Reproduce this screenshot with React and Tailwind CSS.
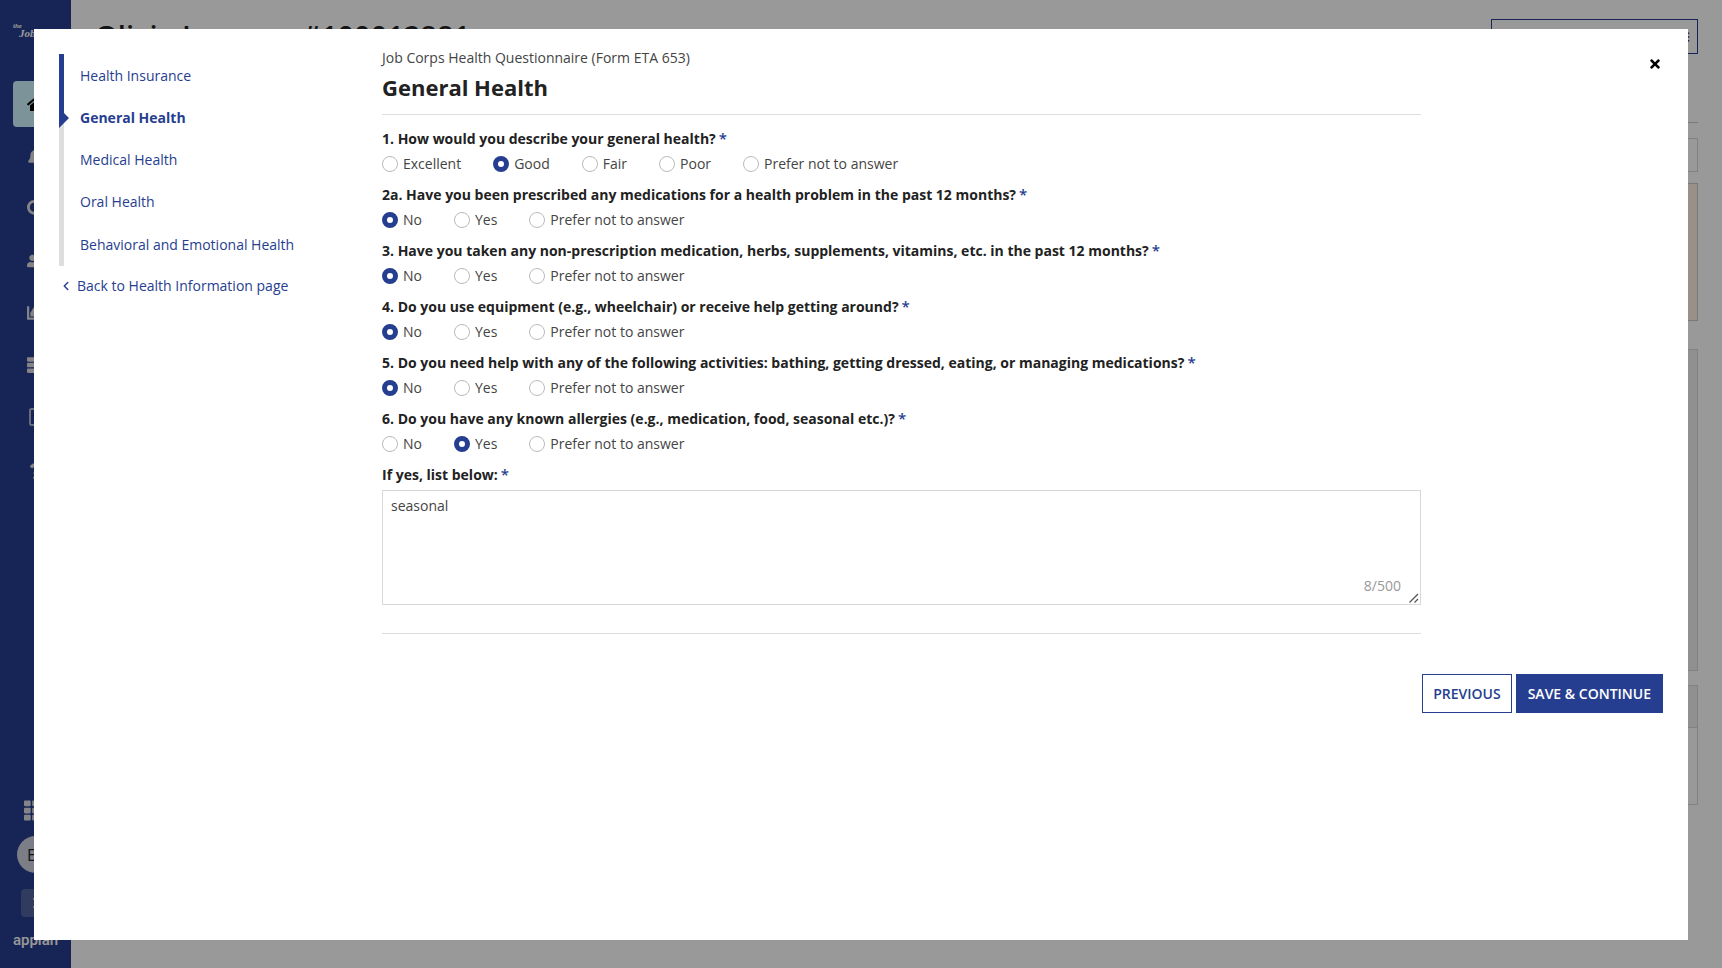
import { useState } from "react";
import { ChevronLeft } from "lucide-react";
import { FaHome, FaBell, FaSearch, FaUserFriends, FaChartArea, FaServer, FaQuestion, FaTh, FaTimes, FaChevronRight, FaChevronDown, FaBars } from "react-icons/fa";

const sideLinks = [
  { name: "Alerts", Icon: FaBell },
  { name: "Search", Icon: FaSearch },
  { name: "People", Icon: FaUserFriends },
  { name: "Reports", Icon: FaChartArea },
  { name: "Records", Icon: FaServer },
];

const steps = ["Health Insurance", "General Health", "Medical Health", "Oral Health", "Behavioral and Emotional Health"];
const currentStep = 1;

const yesNo = ["No", "Yes", "Prefer not to answer"];
const questions = [
  { id: "q1", text: "1. How would you describe your general health?", options: ["Excellent", "Good", "Fair", "Poor", "Prefer not to answer"], value: "Good" },
  { id: "q2a", text: "2a. Have you been prescribed any medications for a health problem in the past 12 months?", options: yesNo, value: "No" },
  { id: "q3", text: "3. Have you taken any non-prescription medication, herbs, supplements, vitamins, etc. in the past 12 months?", options: yesNo, value: "No" },
  { id: "q4", text: "4. Do you use equipment (e.g., wheelchair) or receive help getting around?", options: yesNo, value: "No" },
  { id: "q5", text: "5. Do you need help with any of the following activities: bathing, getting dressed, eating, or managing medications?", options: yesNo, value: "No" },
  { id: "q6", text: "6. Do you have any known allergies (e.g., medication, food, seasonal etc.)?", options: yesNo, value: "Yes" },
];

function Required() {
  return <span className="ml-[3px] text-[15px] leading-none font-semibold text-[#263e8f]">*</span>;
}

function SideLink({ name, children }) {
  return (
    <a href="#" aria-label={name} className="flex h-[52px] w-full items-center justify-center">
      {children}
    </a>
  );
}

function Sidebar() {
  return (
    <nav className="flex w-[71px] shrink-0 flex-col items-center bg-[#263e8f] text-[#dcdce0]">
      <div className="flex h-[81px] w-full flex-col pt-6 pl-[13px] font-['Liberation_Serif',serif] font-bold italic text-white">
        <span className="text-[7px] leading-[4px]">the</span>
        <span className="pl-1.5 text-[11px] leading-[11px] whitespace-nowrap">JobCorps</span>
      </div>
      <a href="#" aria-label="Home" className="mb-1 flex h-[46px] w-[45px] items-center justify-center rounded bg-[#cdf5ff] text-black">
        <FaHome className="size-[18px]" />
      </a>
      {sideLinks.map(({ name, Icon }) => (
        <SideLink key={name} name={name}>
          <Icon className="size-[18px]" />
        </SideLink>
      ))}
      <SideLink name="Devices">
        <svg viewBox="0 0 14 18" className="h-[18px] w-3.5" fill="none" stroke="currentColor" strokeWidth="1.5">
          <rect x="1" y="1" width="12" height="16" rx="1" />
        </svg>
      </SideLink>
      <SideLink name="Help">
        <FaQuestion className="mt-1 size-[17px]" />
      </SideLink>
      <div className="mt-auto flex flex-col items-center">
        <button type="button" aria-label="Apps" className="flex h-9 items-center">
          <FaTh className="size-[23px]" />
        </button>
        <span className="mt-2 flex size-[37px] items-center justify-center rounded-full bg-[#cdd2e0] text-base text-[#222]">EL</span>
        <button type="button" aria-label="Expand menu" className="mt-4 flex h-7 w-[29px] items-center justify-center rounded bg-[#50639f]">
          <FaChevronRight className="size-3" />
        </button>
        <span className="mt-2 mb-[13px] font-['Roboto',sans-serif] text-[15px] leading-[30px] font-medium text-white">appian</span>
      </div>
    </nav>
  );
}

function RecordPage() {
  return (
    <main className="flex min-w-0 grow flex-col bg-white px-6">
      <div className="flex h-[123px] items-start justify-between border-b border-[#ccc] pt-[19px]">
        <h1 className="text-[29px] leading-[34px] font-semibold text-[#222]">Olivia Lorenzo #100012881</h1>
        <button type="button" className="flex h-[35px] w-[207px] items-center justify-between border border-[#263e8f] px-[7px] text-sm text-[#263e8f]">
          RECORD ACTIONS <FaBars className="size-3" />
        </button>
      </div>
      <div className="mt-[15px] flex h-[34px] items-center justify-end border border-[#d8d8d8] px-2 text-[#ccc]">
        <FaChevronDown className="size-2" />
      </div>
      <div className="mt-[11px] h-[138px] border border-[#ccc] bg-[#fff0e1]" />
      <div className="mt-7 h-[322px] border border-[#d8d8d8] bg-[#f0f0f0]" />
      <div className="mt-3.5 h-[120px] border border-[#d8d8d8]">
        <div className="h-[42px] border-b border-[#d8d8d8] bg-[#f0f0f0]" />
      </div>
    </main>
  );
}

function StepNav() {
  return (
    <nav className="w-[326px] shrink-0 pt-[25px] pl-[25px]">
      <ol className="flex flex-col">
        {steps.map((step, i) => (
          <li key={step} className="flex h-[42px] items-center last:h-11">
            {i === currentStep ? (
              <svg viewBox="0 0 10 42" className="h-full w-2.5" aria-hidden="true">
                <rect width="5" height="42" fill="#dedede" />
                <path d="M0 0H5V17L10 22L0 32Z" fill="#263e8f" />
              </svg>
            ) : (
              <span className={i < currentStep ? "mr-[5px] h-full w-[5px] bg-[#263e8f]" : "mr-[5px] h-full w-[5px] bg-[#dedede]"} />
            )}
            <a href="#" aria-current={i === currentStep ? "step" : undefined} className={i === currentStep ? "pt-0.5 pl-[11px] font-bold text-[#263e8f]" : "pt-0.5 pl-[11px] text-[#263e8f]"}>
              {step}
            </a>
          </li>
        ))}
      </ol>
      <a href="#" className="mt-2.5 flex items-center gap-1 text-[#263e8f]">
        <ChevronLeft className="size-3.5" strokeWidth={2.5} />
        Back to Health Information page
      </a>
    </nav>
  );
}

function Question({ id, text, options, value, onChange }) {
  return (
    <fieldset className="pb-[7px]">
      <legend className="leading-6 font-bold text-[#222]">
        {text}
        <Required />
      </legend>
      <div className="flex flex-wrap gap-x-8 pt-px">
        {options.map((option) => (
          <label key={option} className="flex h-6 items-center gap-[5px]">
            <input
              type="radio"
              name={id}
              value={option}
              checked={value === option}
              onChange={() => onChange(option)}
              className="size-4 appearance-none rounded-full border border-[#bbb] bg-white checked:border-[5px] checked:border-[#263e8f]"
            />
            {option}
          </label>
        ))}
      </div>
    </fieldset>
  );
}

export default function App() {
  const [answers, setAnswers] = useState(Object.fromEntries(questions.map((q) => [q.id, q.value])));
  const [allergies, setAllergies] = useState("seasonal");

  return (
    <div className="relative flex min-h-screen font-['Open_Sans',sans-serif] text-sm text-[#444]">
      <Sidebar />
      <RecordPage />
      <div className="fixed inset-0 flex bg-black/40 px-[34px] pt-[29px] pb-7">
        <div role="dialog" aria-modal="true" aria-labelledby="dialog-title" className="flex grow overflow-auto bg-white">
          <StepNav />
          <form className="flex grow flex-col pt-[17px]" onSubmit={(e) => e.preventDefault()}>
            <div className="flex">
              <div className="grow pl-[22px]">
                <header className="border-b border-[#ddd] pb-2.5">
                  <p className="leading-6">Job Corps Health Questionnaire (Form ETA 653)</p>
                  <h2 id="dialog-title" className="text-[22px] leading-[34px] font-bold text-[#222]">General Health</h2>
                </header>
                <div className="pt-3">
                  {questions.map((q) => (
                    <Question key={q.id} {...q} value={answers[q.id]} onChange={(v) => setAnswers({ ...answers, [q.id]: v })} />
                  ))}
                </div>
                <label htmlFor="allergies" className="block leading-6 font-bold text-[#222]">
                  If yes, list below:
                  <Required />
                </label>
                <div className="relative mt-[3px] flex">
                  <textarea
                    id="allergies"
                    maxLength={500}
                    value={allergies}
                    onChange={(e) => setAllergies(e.target.value)}
                    className="h-[115px] w-full resize-none border border-[#d8d8d8] px-2 py-[5px]"
                  />
                  <span className="absolute right-5 bottom-[9px] text-[#999]">{allergies.length}/500</span>
                  <svg viewBox="0 0 10 10" className="absolute right-0.5 bottom-0.5 size-2.5" stroke="#555" strokeWidth="1.3" aria-hidden="true">
                    <path d="M0.500 9.500L9 1M5.500 9.500L9 6" />
                  </svg>
                </div>
                <hr className="mt-7 border-[#ddd]" />
              </div>
              <div className="flex w-[267px] shrink-0 justify-end pt-2.5 pr-[25px]">
                <button type="button" aria-label="Close" className="flex size-4 items-center justify-center text-black">
                  <FaTimes className="size-3.5" />
                </button>
              </div>
            </div>
            <div className="mt-10 flex justify-end gap-1 pr-[25px] font-semibold">
              <button type="button" className="h-[39px] border border-[#263e8f] px-2.5 text-[#263e8f]">PREVIOUS</button>
              <button type="submit" className="h-[39px] border border-[#263e8f] bg-[#263e8f] px-[11px] text-white">SAVE &amp; CONTINUE</button>
            </div>
          </form>
        </div>
      </div>
    </div>
  );
}
